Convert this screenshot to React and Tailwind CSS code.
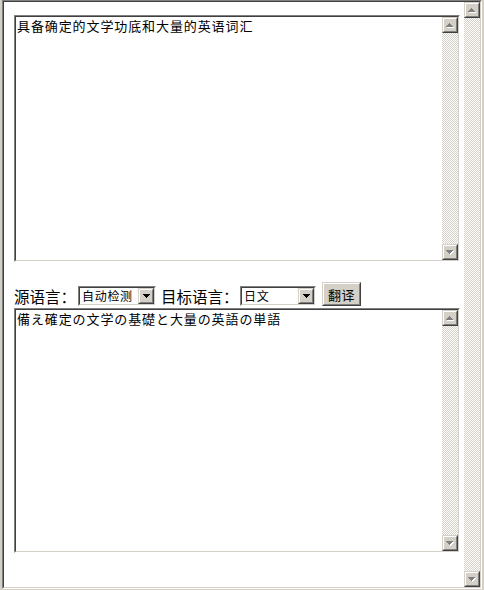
import React from "react";

// pixel arrows, drawn as little stacked bars
function Arrow({ dir = "up" }) {
  const up = "M3 0h1v1H3z M2 1h3v1H2z M1 2h5v1H1z M0 3h7v1H0z";
  const down = "M0 0h7v1H0z M1 1h5v1H1z M2 2h3v1H2z M3 3h1v1H3z";
  const d = dir === "up" ? up : down;
  return (
    <svg width="8" height="5" viewBox="0 0 8 5" shapeRendering="crispEdges">
      <path d={d} transform="translate(1 1)" fill="#ffffff" />
      <path d={d} fill="#808080" />
    </svg>
  );
}

function DropArrow() {
  return (
    <svg width="7" height="4" viewBox="0 0 7 4" shapeRendering="crispEdges">
      <path d="M0 0h7v1H0z M1 1h5v1H1z M2 2h3v1H2z M3 3h1v1H3z" fill="#000000" />
    </svg>
  );
}

function Raised({ className = "", children }) {
  return (
    <div
      className={`border border-t-[#d4d0c8] border-l-[#d4d0c8] border-b-[#404040] border-r-[#404040] ${className}`}
    >
      <div className="flex h-full w-full items-center justify-center border border-t-white border-l-white border-b-[#808080] border-r-[#808080] bg-[#d4d0c8]">
        {children}
      </div>
    </div>
  );
}

function Sunken({ className = "", children }) {
  return (
    <div
      className={`border border-t-[#808080] border-l-[#808080] border-b-white border-r-white ${className}`}
    >
      <div className="flex h-full w-full border border-t-[#404040] border-l-[#404040] border-b-[#d4d0c8] border-r-[#d4d0c8] bg-white">
        {children}
      </div>
    </div>
  );
}

function ScrollBar() {
  return (
    <div className="flex h-full w-4 shrink-0 flex-col">
      <Raised className="h-4 w-4 shrink-0">
        <Arrow dir="up" />
      </Raised>
      <div className="flex-1 bg-[repeating-conic-gradient(#d4d0c8_0_25%,#ffffff_0_50%)] bg-[length:2px_2px]" />
      <Raised className="h-4 w-4 shrink-0">
        <Arrow dir="down" />
      </Raised>
    </div>
  );
}

function TextBox({ text, className = "" }) {
  return (
    <Sunken className={`w-[446px] ${className}`}>
      <div className="flex-1 pl-[1px] pt-[1px] text-[13px] leading-[15px] tracking-[0.9px] text-black">
        {text}
      </div>
      <ScrollBar />
    </Sunken>
  );
}

function Select({ value, className = "" }) {
  return (
    <Sunken className={`h-[20px] shrink-0 ${className}`}>
      <div className="flex flex-1 items-center overflow-hidden whitespace-nowrap pl-[2px] text-[12px] leading-none tracking-[0.7px] text-black">
        {value}
      </div>
      <Raised className="h-4 w-4 shrink-0">
        <DropArrow />
      </Raised>
    </Sunken>
  );
}

export default function App() {
  return (
    <div className="h-[590px] w-[484px] overflow-hidden bg-[#d4d0c8] font-['Noto_Sans_CJK_SC','Noto_Sans_CJK_JP',sans-serif]">
      <div className="ml-[2px] flex h-[589px] w-[480px] border border-t-[#808080] border-l-[#808080] border-b-white border-r-white">
        <div className="flex flex-1 border border-t-[#404040] border-l-[#404040] border-b-[#d4d0c8] border-r-[#d4d0c8] bg-white">
          <div className="flex flex-1 flex-col pl-[10px] pt-[13px]">
            <TextBox className="h-[247px]" text="具备确定的文学功底和大量的英语词汇" />

            <div className="mt-[20px] flex h-[24px] items-end whitespace-nowrap text-black">
              <span className="w-[64px] shrink-0 text-[15.5px] leading-[20px]">源语言：</span>
              <Select className="w-[78px]" value="自动检测" />
              <span className="ml-[5px] w-[79px] shrink-0 text-[15.5px] leading-[20px]">目标语言：</span>
              <Select className="w-[76px]" value="日文" />
              <Raised className="ml-[6px] h-[24px] w-[39px] shrink-0">
                <span className="text-[13px] leading-none tracking-[0.5px]">翻译</span>
              </Raised>
            </div>

            <TextBox className="mt-[2px] h-[245px]" text="備え確定の文学の基礎と大量の英語の単語" />
          </div>
          <ScrollBar />
        </div>
      </div>
    </div>
  );
}
